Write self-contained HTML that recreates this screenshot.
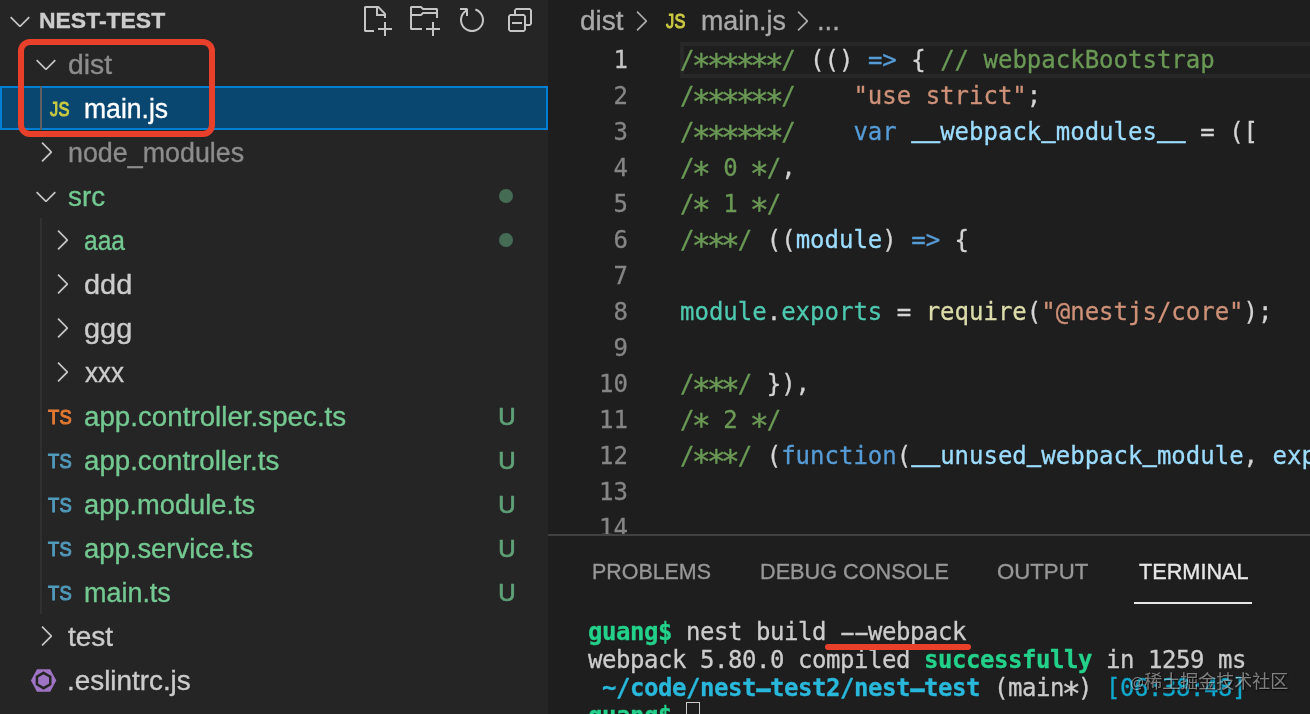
<!DOCTYPE html>
<html><head><meta charset="utf-8">
<style>
*{box-sizing:border-box;margin:0;padding:0}
#side,#ed,#panel{will-change:transform}
html,body{width:1310px;height:714px;overflow:hidden;background:#1e1e1e}
body{position:relative;font-family:"Liberation Sans","Noto Sans CJK SC",sans-serif}
#side{position:absolute;left:0;top:0;width:548px;height:714px;background:#252526;overflow:hidden}
.row{position:absolute;left:0;width:548px;height:44px;font-size:27px;line-height:44px;color:#cccccc;white-space:nowrap}
.row.sel{background:#094771;outline:2px solid #007fd4;outline-offset:-2px}
.row .lbl{position:absolute;top:1px;transform-origin:0 50%;-webkit-text-stroke:0.35px}
.row .st{position:absolute;top:1px;left:498.2px;font-size:24px;color:#60a278;-webkit-text-stroke:0.7px #60a278}
.g{color:#73c991}
.dim{color:#8c8c8c}
.dot{position:absolute;left:498.6px;top:14.6px;width:14.8px;height:14.8px;border-radius:50%;background:#456b55}
.chev{position:absolute;top:6px;width:32px;height:32px}
.ic{position:absolute;top:1px;font-weight:normal;-webkit-text-stroke:1px;font-size:19.5px;letter-spacing:0.3px;transform-origin:0 50%;transform:scaleX(0.94)}
.ic.js{transform:scaleX(0.84)}
.ts{color:#519aba}.tso{color:#e37933}.js{color:#cbcb41}
.guide{position:absolute;width:2px;background:#303030}
#redbox{position:absolute;left:18.3px;top:38.9px;width:197px;height:98.1px;border:6.5px solid #e8402a;border-radius:12px}
#ed{position:absolute;left:548px;top:0;width:762px;height:534px;background:#1e1e1e;overflow:hidden}
.bc{transform-origin:0 50%;position:absolute;top:-0.5px;height:42px;line-height:42px;font-size:27px;color:#a9a9a9;white-space:nowrap;-webkit-text-stroke:0.35px}
.bchev{position:absolute;top:5.3px;width:32px;height:32px}
.ln{position:absolute;left:0;width:80px;text-align:right;font-family:"DejaVu Sans Mono","Liberation Mono",monospace;font-size:24px;line-height:36px;color:#858585;height:36px;-webkit-text-stroke:0.3px}
.cl{position:absolute;left:132px;font-family:"DejaVu Sans Mono","Liberation Mono",monospace;font-size:24px;line-height:36px;height:36px;color:#d4d4d4;white-space:pre;-webkit-text-stroke:0.3px}
.c{color:#6a9955}.k{color:#569cd6}.s{color:#ce9178}.v{color:#9cdcfe}.t{color:#4ec9b0}.f{color:#dcdcaa}
#curline{position:absolute;left:132px;top:42px;width:640px;height:36px;border:4px solid #282828}
.as{display:inline-block;transform:translateY(5.4px) scale(1.32)}
.us{display:inline-block;transform-origin:50% 31.5px;transform:translateY(-2.2px) scaleY(1.8)}
#panel{position:absolute;left:548px;top:534px;width:762px;height:180px;background:#1e1e1e;overflow:hidden}
#pborder{position:absolute;left:0;top:0;width:762px;height:2px;background:#414141}
.tab{transform-origin:0 50%;position:absolute;top:24.2px;font-size:22.4px;line-height:28px;color:#979797;white-space:nowrap;-webkit-text-stroke:0.35px}
#tabline{position:absolute;left:586.2px;top:67.7px;width:117.8px;height:2px;background:#e7e7e7}
.tl{position:absolute;left:40px;font-family:"DejaVu Sans Mono","Liberation Mono",monospace;font-size:24px;letter-spacing:-0.45px;line-height:28px;height:28px;color:#cccccc;white-space:pre;-webkit-text-stroke:0.3px}
.tg{color:#23d18b;font-weight:bold}.tb{color:#29b8db;font-weight:bold}.tc{color:#11a8cd}
.hy{display:inline-block;transform:translateY(1px) scaleX(1.9)}
.as2{display:inline-block;transform:translateY(5.4px) scale(1.32)}
#cursor{display:inline-block;width:14px;height:28px;border:1px solid #cccccc;vertical-align:top;margin-top:0}
#redline{position:absolute;left:276.7px;top:109.9px;width:146px;height:6.3px;border-radius:3.2px;background:#e8402a}
#wm{position:absolute;left:582px;top:135px;font-size:18px;line-height:26px;color:rgba(255,255,255,0.45);text-shadow:1px 1px 1.5px rgba(0,0,0,0.8);white-space:nowrap}
</style></head><body>
<div id="side">
<div class="row" style="top:-2px"><svg class="chev" style="left:3.8px;top:6.7px" viewBox="0 0 16 16"><path d="M7.976 10.072l4.357-4.357.62.618L8.284 11h-.618L3 6.333l.619-.618 4.357 4.357z" fill="#c5c5c5"/></svg><span id="hdr" class="lbl" style="left:39.40px;font-weight:bold;font-size:22.5px;color:#cccccc;transform:scaleX(1.0195)">NEST-TEST</span><svg style="position:absolute;left:360px;top:6px;width:176px;height:32px" viewBox="0 0 88 16" fill="#c5c5c5">
<path fill-rule="evenodd" d="M9.5 1.1l3.4 3.5.1.4v2h-1V6H8V2H3v11h4v1H2.5l-.5-.5v-12l.5-.5h6.7l.3.1zM9 2v3h2.9L9 2zm4 14h-1v-3H9v-1h3V9h1v3h3v1h-3v3z"/>
<path transform="translate(24 0)" fill-rule="evenodd" d="M14.5 2H7.71l-.85-.85L6.51 1h-5l-.5.5v11l.5.5H7v-1H2V6h4.49l.35-.15.86-.86H14v1.5l-.001.51h1.011V2.5L14.5 2zm-.51 2h-6.5l-.35.15-.86.86H2v-3h4.29l.85.85.36.15H14l-.01.99zM13 16h-1v-3H9v-1h3V9h1v3h3v1h-3v3z"/>
<path transform="translate(48 0)" fill-rule="evenodd" d="M4.681 3H2V2h3.5l.5.5V6H5V4a5 5 0 1 0 4.53-.761l.302-.954A6 6 0 1 1 4.681 3z"/>
<g transform="translate(72 0)"><path d="M9 9H4v1h5V9z"/><path fill-rule="evenodd" d="M5 3l1-1h7l1 1v7l-1 1h-2v2l-1 1H3l-1-1V6l1-1h2V3zm1 2h4l1 1v4h2V3H6v2zm4 1H3v7h7V6z"/></g>
</svg></div>
<div class="row" style="top:42px;"><svg class="chev" style="left:30px" viewBox="0 0 16 16"><path d="M7.976 10.072l4.357-4.357.62.618L8.284 11h-.618L3 6.333l.619-.618 4.357 4.357z" fill="#c5c5c5"/></svg><span id="dist" class="lbl dim" style="left:68.20px;transform:scaleX(1.0488)">dist</span></div>
<div class="row sel" style="top:86px"><span class="guide" style="left:40px;top:0;height:44px;width:2px;background:#606060"></span><span class="ic js" style="left:49.6px">JS</span><span id="mainjs" class="lbl" style="left:84.00px;transform:scaleX(0.9833);color:#fff">main.js</span></div>
<div class="row" style="top:130px;"><svg class="chev" style="left:30px" viewBox="0 0 16 16"><path d="M10.072 8.024L5.715 3.667l.618-.62L11 7.716v.618L6.333 13l-.618-.619 4.357-4.357z" fill="#c5c5c5"/></svg><span id="node_modules" class="lbl dim" style="left:68.00px;transform:scaleX(0.9943)">node_modules</span></div>
<div class="row" style="top:174px;"><svg class="chev" style="left:30px" viewBox="0 0 16 16"><path d="M7.976 10.072l4.357-4.357.62.618L8.284 11h-.618L3 6.333l.619-.618 4.357 4.357z" fill="#c5c5c5"/></svg><span id="src" class="lbl g" style="left:68.00px;transform:scaleX(1.0289)">src</span><span class="dot"></span></div>
<div class="row" style="top:218px;"><svg class="chev" style="left:46px" viewBox="0 0 16 16"><path d="M10.072 8.024L5.715 3.667l.618-.62L11 7.716v.618L6.333 13l-.618-.619 4.357-4.357z" fill="#c5c5c5"/></svg><span id="aaa" class="lbl g" style="left:84.00px;transform:scaleX(0.9094)">aaa</span><span class="dot"></span></div>
<div class="row" style="top:262px;"><svg class="chev" style="left:46px" viewBox="0 0 16 16"><path d="M10.072 8.024L5.715 3.667l.618-.62L11 7.716v.618L6.333 13l-.618-.619 4.357-4.357z" fill="#c5c5c5"/></svg><span id="ddd" class="lbl " style="left:83.80px;transform:scaleX(1.0698)">ddd</span></div>
<div class="row" style="top:306px;"><svg class="chev" style="left:46px" viewBox="0 0 16 16"><path d="M10.072 8.024L5.715 3.667l.618-.62L11 7.716v.618L6.333 13l-.618-.619 4.357-4.357z" fill="#c5c5c5"/></svg><span id="ggg" class="lbl " style="left:83.80px;transform:scaleX(1.0700)">ggg</span></div>
<div class="row" style="top:350px;"><svg class="chev" style="left:46px" viewBox="0 0 16 16"><path d="M10.072 8.024L5.715 3.667l.618-.62L11 7.716v.618L6.333 13l-.618-.619 4.357-4.357z" fill="#c5c5c5"/></svg><span id="xxx" class="lbl " style="left:85.00px;transform:scaleX(0.9650)">xxx</span></div>
<div class="row" style="top:394px;"><span class="ic tso" style="left:47.6px">TS</span><span id="spec" class="lbl g" style="left:83.60px;transform:scaleX(1.0276)">app.controller.spec.ts</span><span class="st">U</span></div>
<div class="row" style="top:438px;"><span class="ic ts" style="left:47.6px">TS</span><span id="ctrl" class="lbl g" style="left:84.00px;transform:scaleX(1.0243)">app.controller.ts</span><span class="st">U</span></div>
<div class="row" style="top:482px;"><span class="ic ts" style="left:47.6px">TS</span><span id="mod" class="lbl g" style="left:84.00px;transform:scaleX(1.0095)">app.module.ts</span><span class="st">U</span></div>
<div class="row" style="top:526px;"><span class="ic ts" style="left:47.6px">TS</span><span id="svc" class="lbl g" style="left:84.00px;transform:scaleX(1.0158)">app.service.ts</span><span class="st">U</span></div>
<div class="row" style="top:570px;"><span class="ic ts" style="left:47.6px">TS</span><span id="maints" class="lbl g" style="left:84.40px;transform:scaleX(0.9977)">main.ts</span><span class="st">U</span></div>
<div class="row" style="top:614px;"><svg class="chev" style="left:30px" viewBox="0 0 16 16"><path d="M10.072 8.024L5.715 3.667l.618-.62L11 7.716v.618L6.333 13l-.618-.619 4.357-4.357z" fill="#c5c5c5"/></svg><span id="test" class="lbl " style="left:68.00px;transform:scaleX(1.0367)">test</span></div>
<div class="row" style="top:658px;"><svg style="position:absolute;left:0;top:0;width:70px;height:44px" viewBox="0 0 70 44"><path d="M30.90 22.50 L37.00 11.30 L50.20 11.30 L56.30 22.50 L50.20 33.70 L37.00 33.70 Z" fill="#a074c4"/><path d="M43.60 14.80 L50.27 18.65 L50.27 26.35 L43.60 30.20 L36.93 26.35 L36.93 18.65 Z" fill="none" stroke="#252526" stroke-width="2.5"/></svg><span id="eslint" class="lbl " style="left:67.20px;transform:scaleX(1.0308)">.eslintrc.js</span></div><span class="guide" style="left:40px;top:218px;height:396px"></span><div id="redbox"></div>
</div>
<div id="ed">
<div id="curline"></div>
<div class="bc" id="bc1" style="left:32.40px;transform:scaleX(1.0344)">dist</div>
<svg class="bchev" style="left:77.3px" viewBox="0 0 16 16"><path d="M10.072 8.024L5.715 3.667l.618-.62L11 7.716v.618L6.333 13l-.618-.619 4.357-4.357z" fill="#a9a9a9"/></svg>
<div class="ic js" id="bc2" style="left:117.80px;top:0;line-height:42px">JS</div>
<div class="bc" id="bc3" style="left:153.00px;transform:scaleX(0.9929)">main.js</div>
<svg class="bchev" style="left:237.6px" viewBox="0 0 16 16"><path d="M10.072 8.024L5.715 3.667l.618-.62L11 7.716v.618L6.333 13l-.618-.619 4.357-4.357z" fill="#a9a9a9"/></svg>
<div class="bc" id="bc4" style="left:268.80px;transform:scaleX(1.0121)">...</div>
<div class="ln" style="top:42px;color:#c6c6c6">1</div><div class="cl" id="cl1" style="top:42px"><span class="c">/<span class="as">*</span><span class="as">*</span><span class="as">*</span><span class="as">*</span><span class="as">*</span><span class="as">*</span>/</span> (() <span class="k">=&gt;</span> { <span class="c">// webpackBootstrap</span></div>
<div class="ln" style="top:78px">2</div><div class="cl" id="cl2" style="top:78px"><span class="c">/<span class="as">*</span><span class="as">*</span><span class="as">*</span><span class="as">*</span><span class="as">*</span><span class="as">*</span>/</span>    <span class="s">"use strict"</span>;</div>
<div class="ln" style="top:114px">3</div><div class="cl" id="cl3" style="top:114px"><span class="c">/<span class="as">*</span><span class="as">*</span><span class="as">*</span><span class="as">*</span><span class="as">*</span><span class="as">*</span>/</span>    <span class="k">var</span> <span class="v"><span class="us">__</span>webpack<span class="us">_</span>modules<span class="us">__</span></span> = ([</div>
<div class="ln" style="top:150px">4</div><div class="cl" id="cl4" style="top:150px"><span class="c">/<span class="as">*</span> 0 <span class="as">*</span>/</span>,</div>
<div class="ln" style="top:186px">5</div><div class="cl" id="cl5" style="top:186px"><span class="c">/<span class="as">*</span> 1 <span class="as">*</span>/</span></div>
<div class="ln" style="top:222px">6</div><div class="cl" id="cl6" style="top:222px"><span class="c">/<span class="as">*</span><span class="as">*</span><span class="as">*</span>/</span> ((<span class="v">module</span>) <span class="k">=&gt;</span> {</div>
<div class="ln" style="top:258px">7</div>
<div class="ln" style="top:294px">8</div><div class="cl" id="cl8" style="top:294px"><span class="t">module</span>.<span class="t">exports</span> = <span class="f">require</span>(<span class="s">"@nestjs/core"</span>);</div>
<div class="ln" style="top:330px">9</div>
<div class="ln" style="top:366px">10</div><div class="cl" id="cl10" style="top:366px"><span class="c">/<span class="as">*</span><span class="as">*</span><span class="as">*</span>/</span> }),</div>
<div class="ln" style="top:402px">11</div><div class="cl" id="cl11" style="top:402px"><span class="c">/<span class="as">*</span> 2 <span class="as">*</span>/</span></div>
<div class="ln" style="top:438px">12</div><div class="cl" id="cl12" style="top:438px"><span class="c">/<span class="as">*</span><span class="as">*</span><span class="as">*</span>/</span> (<span class="k">function</span>(<span class="v"><span class="us">__</span>unused<span class="us">_</span>webpack<span class="us">_</span>module</span>, <span class="v">exports</span>, <span class="v"><span class="us">__</span>webpack<span class="us">_</span>require<span class="us">__</span></span>) {</div>
<div class="ln" style="top:474px">13</div>
<div class="ln" style="top:510px">14</div>
</div>
<div id="panel">
<div id="pborder"></div>
<div class="tab" id="tab1" style="left:43.80px;transform:scaleX(0.9561)">PROBLEMS</div>
<div class="tab" id="tab2" style="left:211.60px;transform:scaleX(0.9670)">DEBUG CONSOLE</div>
<div class="tab" id="tab3" style="left:449.00px;transform:scaleX(0.9912)">OUTPUT</div>
<div class="tab" id="tab4" style="left:590.60px;transform:scaleX(0.9682);color:#e7e7e7">TERMINAL</div>
<div id="tabline"></div>
<div class="tl" style="top:83.5px"><span class="tg">guang$</span> nest build <span class="hy">-</span><span class="hy">-</span>webpack</div>
<div class="tl" style="top:111.5px">webpack 5.80.0 compiled <span class="tg">successfully</span> in 1259 ms</div>
<div class="tl" style="top:139.5px"> <span class="tb">~/code/nest<span class="hy">-</span>test2/nest<span class="hy">-</span>test</span> (main<span class="as2">*</span>) <span class="tc">[06:38:48]</span></div>
<div class="tl" style="top:167.5px"><span class="tg">guang$</span> <span id="cursor"></span></div>
<div id="redline"></div>
<div id="wm"><span style="font-size:14px">@</span>稀土掘金技术社区</div>
</div>
</body></html>
